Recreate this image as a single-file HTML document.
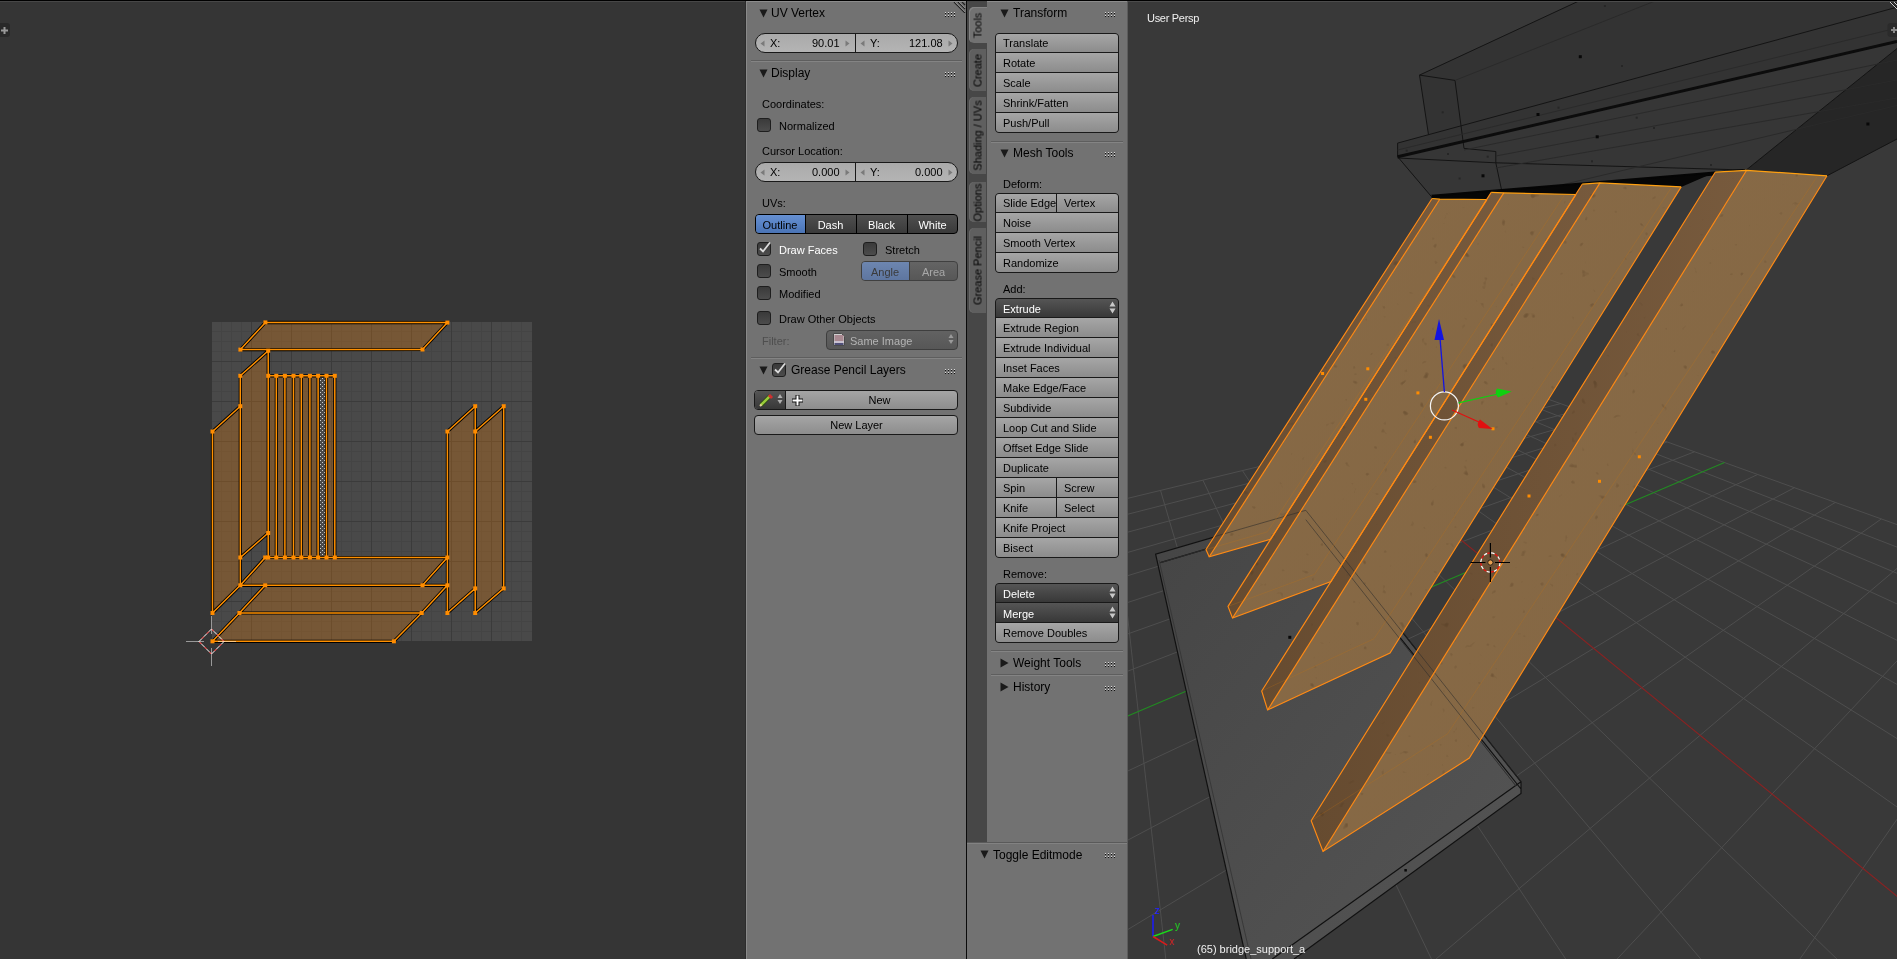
<!DOCTYPE html>
<html><head><meta charset="utf-8"><style>
*{margin:0;padding:0}
html,body{width:1897px;height:959px;overflow:hidden;background:#353535}
body{position:relative;font-family:"Liberation Sans",sans-serif}
.a{position:absolute}
.t{position:absolute;white-space:nowrap;line-height:1;will-change:transform}
.tool{background:linear-gradient(#a5a5a5,#8d8d8d);border:1px solid #191919}
.tool0{background:linear-gradient(#a6a6a6,#8c8c8c)}
.menu{background:linear-gradient(#555555,#383838)}
.num{background:linear-gradient(#aaaaaa,#b4b4b4);border:1px solid #191919;border-radius:10px}
.cb{background:linear-gradient(#3a3a3a,#4c4c4c);border:1px solid #1e1e1e;border-radius:3px}
.radio{background:linear-gradient(#4f4f4f,#3a3a3a);border:1px solid #000}
.rsel{background:linear-gradient(#6690d2,#4a74b6)}
</style></head><body>
<svg class="a" style="left:0;top:0" width="745" height="959">
<defs><pattern id="dots" x="0" y="0" width="4" height="4" patternUnits="userSpaceOnUse"><rect width="4" height="4" fill="#4a4a4a"/><rect x="0" y="0" width="1" height="1" fill="#d0d0d0"/><rect x="2" y="2" width="1" height="1" fill="#d0d0d0"/></pattern></defs>
<rect x="212" y="322" width="320" height="319" fill="#494949"/>
<path d="M221.5 322V641M231.5 322V641M241.5 322V641M251.5 322V641M261.5 322V641M271.5 322V641M281.5 322V641M291.5 322V641M301.5 322V641M311.5 322V641M321.5 322V641M331.5 322V641M341.5 322V641M351.5 322V641M361.5 322V641M371.5 322V641M381.5 322V641M391.5 322V641M401.5 322V641M411.5 322V641M421.5 322V641M431.5 322V641M441.5 322V641M451.5 322V641M461.5 322V641M471.5 322V641M481.5 322V641M491.5 322V641M501.5 322V641M511.5 322V641M521.5 322V641M212 331.5H532M212 341.5H532M212 351.5H532M212 361.5H532M212 371.5H532M212 381.5H532M212 391.5H532M212 401.5H532M212 411.5H532M212 421.5H532M212 431.5H532M212 441.5H532M212 451.5H532M212 461.5H532M212 471.5H532M212 481.5H532M212 491.5H532M212 501.5H532M212 511.5H532M212 521.5H532M212 531.5H532M212 541.5H532M212 551.5H532M212 561.5H532M212 571.5H532M212 581.5H532M212 591.5H532M212 601.5H532M212 611.5H532M212 621.5H532M212 631.5H532" stroke="#444444" stroke-width="1"/>
<path d="M251.5 322V641M212 361.5H532M291.5 322V641M212 401.5H532M331.5 322V641M212 441.5H532M371.5 322V641M212 481.5H532M411.5 322V641M212 521.5H532M451.5 322V641M212 561.5H532M491.5 322V641M212 601.5H532" stroke="#3b3b3b" stroke-width="1"/>
<polygon points="265.4,322.4 447.4,322.6 422.5,349.5 240.4,349.6" fill="rgba(255,133,0,0.25)"/>
<polygon points="268.2,350.7 268.2,533 240.3,557.5 240.3,375.8" fill="rgba(255,133,0,0.25)"/>
<polygon points="240.3,406.2 240.3,585.3 212.5,613 212.5,431.5" fill="rgba(255,133,0,0.25)"/>
<polygon points="268.2,375.8 334.8,375.8 334.8,557.5 268.2,557.5" fill="rgba(255,133,0,0.25)"/>
<polygon points="265.2,557.5 447.4,557.5 422.5,585.3 240.3,585.3" fill="rgba(255,133,0,0.25)"/>
<polygon points="265.2,585.3 447.4,585.3 421.7,613 239.4,613" fill="rgba(255,133,0,0.25)"/>
<polygon points="239.4,613 421.7,613 393.9,641.3 212.5,641.3" fill="rgba(255,133,0,0.25)"/>
<polygon points="447.4,431.5 475.2,406.2 475.2,588.4 447.4,613" fill="rgba(255,133,0,0.25)"/>
<polygon points="475.2,431.5 503.7,406.2 503.7,588.4 475.2,613" fill="rgba(255,133,0,0.25)"/>
<rect x="319.1" y="376" width="6.399999999999977" height="181" fill="url(#dots)"/>
<path d="M265.4,322.4L447.4,322.6L422.5,349.5L240.4,349.6ZM268.2,350.7L268.2,533L240.3,557.5L240.3,375.8ZM240.3,406.2L240.3,585.3L212.5,613L212.5,431.5ZM268.2,375.8L334.8,375.8L334.8,557.5L268.2,557.5ZM265.2,557.5L447.4,557.5L422.5,585.3L240.3,585.3ZM265.2,585.3L447.4,585.3L421.7,613L239.4,613ZM239.4,613L421.7,613L393.9,641.3L212.5,641.3ZM447.4,431.5L475.2,406.2L475.2,588.4L447.4,613ZM475.2,431.5L503.7,406.2L503.7,588.4L475.2,613ZM268.2,375.8V557.5M276.3,375.8V557.5M284.9,375.8V557.5M293.5,375.8V557.5M301.3,375.8V557.5M309.9,375.8V557.5M318.1,375.8V557.5M326.5,375.8V557.5M334.8,375.8V557.5" stroke="#000" stroke-width="3.2" fill="none" stroke-linejoin="round"/>
<path d="M265.4,322.4L447.4,322.6L422.5,349.5L240.4,349.6ZM268.2,350.7L268.2,533L240.3,557.5L240.3,375.8ZM240.3,406.2L240.3,585.3L212.5,613L212.5,431.5ZM268.2,375.8L334.8,375.8L334.8,557.5L268.2,557.5ZM265.2,557.5L447.4,557.5L422.5,585.3L240.3,585.3ZM265.2,585.3L447.4,585.3L421.7,613L239.4,613ZM239.4,613L421.7,613L393.9,641.3L212.5,641.3ZM447.4,431.5L475.2,406.2L475.2,588.4L447.4,613ZM475.2,431.5L503.7,406.2L503.7,588.4L475.2,613ZM268.2,375.8V557.5M276.3,375.8V557.5M284.9,375.8V557.5M293.5,375.8V557.5M301.3,375.8V557.5M309.9,375.8V557.5M318.1,375.8V557.5M326.5,375.8V557.5M334.8,375.8V557.5" stroke="#ff9000" stroke-width="1.5" fill="none" stroke-linejoin="round"/>
<rect x="501.7" y="586.4" width="4" height="4" fill="#ff8c00"/><rect x="473.2" y="586.4" width="4" height="4" fill="#ff8c00"/><rect x="332.8" y="373.8" width="4" height="4" fill="#ff8c00"/><rect x="324.5" y="373.8" width="4" height="4" fill="#ff8c00"/><rect x="419.7" y="611.0" width="4" height="4" fill="#ff8c00"/><rect x="210.5" y="611.0" width="4" height="4" fill="#ff8c00"/><rect x="238.3" y="373.8" width="4" height="4" fill="#ff8c00"/><rect x="445.4" y="429.5" width="4" height="4" fill="#ff8c00"/><rect x="299.3" y="555.5" width="4" height="4" fill="#ff8c00"/><rect x="266.2" y="531.0" width="4" height="4" fill="#ff8c00"/><rect x="501.7" y="404.2" width="4" height="4" fill="#ff8c00"/><rect x="473.2" y="404.2" width="4" height="4" fill="#ff8c00"/><rect x="307.9" y="555.5" width="4" height="4" fill="#ff8c00"/><rect x="263.2" y="583.3" width="4" height="4" fill="#ff8c00"/><rect x="266.2" y="555.5" width="4" height="4" fill="#ff8c00"/><rect x="420.5" y="347.5" width="4" height="4" fill="#ff8c00"/><rect x="299.3" y="373.8" width="4" height="4" fill="#ff8c00"/><rect x="237.4" y="611.0" width="4" height="4" fill="#ff8c00"/><rect x="307.9" y="373.8" width="4" height="4" fill="#ff8c00"/><rect x="316.1" y="555.5" width="4" height="4" fill="#ff8c00"/><rect x="274.3" y="555.5" width="4" height="4" fill="#ff8c00"/><rect x="266.2" y="373.8" width="4" height="4" fill="#ff8c00"/><rect x="445.4" y="611.0" width="4" height="4" fill="#ff8c00"/><rect x="445.4" y="583.3" width="4" height="4" fill="#ff8c00"/><rect x="263.4" y="320.4" width="4" height="4" fill="#ff8c00"/><rect x="391.9" y="639.3" width="4" height="4" fill="#ff8c00"/><rect x="473.2" y="429.5" width="4" height="4" fill="#ff8c00"/><rect x="263.2" y="555.5" width="4" height="4" fill="#ff8c00"/><rect x="238.4" y="347.6" width="4" height="4" fill="#ff8c00"/><rect x="238.3" y="583.3" width="4" height="4" fill="#ff8c00"/><rect x="266.2" y="348.7" width="4" height="4" fill="#ff8c00"/><rect x="274.3" y="373.8" width="4" height="4" fill="#ff8c00"/><rect x="316.1" y="373.8" width="4" height="4" fill="#ff8c00"/><rect x="282.9" y="555.5" width="4" height="4" fill="#ff8c00"/><rect x="291.5" y="555.5" width="4" height="4" fill="#ff8c00"/><rect x="210.5" y="429.5" width="4" height="4" fill="#ff8c00"/><rect x="210.5" y="639.3" width="4" height="4" fill="#ff8c00"/><rect x="445.4" y="555.5" width="4" height="4" fill="#ff8c00"/><rect x="420.5" y="583.3" width="4" height="4" fill="#ff8c00"/><rect x="332.8" y="555.5" width="4" height="4" fill="#ff8c00"/><rect x="282.9" y="373.8" width="4" height="4" fill="#ff8c00"/><rect x="238.3" y="555.5" width="4" height="4" fill="#ff8c00"/><rect x="238.3" y="404.2" width="4" height="4" fill="#ff8c00"/><rect x="473.2" y="611.0" width="4" height="4" fill="#ff8c00"/><rect x="291.5" y="373.8" width="4" height="4" fill="#ff8c00"/><rect x="324.5" y="555.5" width="4" height="4" fill="#ff8c00"/><rect x="445.4" y="320.6" width="4" height="4" fill="#ff8c00"/>
<path d="M199.0,641.5L211.5,629.0L224.0,641.5L211.5,654.0Z" stroke="#fff" stroke-width="1" fill="none"/>
<path d="M199.0,641.5L211.5,629.0L224.0,641.5L211.5,654.0Z" stroke="#e00" stroke-width="1" stroke-dasharray="3 4" stroke-dashoffset="-4" fill="none"/>
<path d="M186.5,641.5H204.5M218.5,641.5H236.5M211.5,616.5V634.5M211.5,648.5V666.5" stroke="#fff" stroke-width="1" stroke-dasharray="1 1"/>
</svg>
<div class="a" style="left:-5px;top:23px;width:15px;height:14px;background:#292929;border-radius:3px"></div>
<svg class="a" style="left:0;top:26px" width="9" height="9"><path d="M4.5 1V8M1 4.5H8" stroke="#999" stroke-width="2"/></svg>
<svg class="a" style="left:0;top:0" width="1897" height="959" viewBox="0 0 1897 959">
<defs><clipPath id="vp"><rect x="1128" y="1" width="769" height="958"/></clipPath><linearGradient id="gw" x1="0" y1="0" x2="1" y2="1"><stop offset="0" stop-color="#896c48"/><stop offset="1" stop-color="#836542"/></linearGradient><linearGradient id="gn" x1="0" y1="0" x2="1" y2="1"><stop offset="0" stop-color="#6e5335"/><stop offset="1" stop-color="#6a4f33"/></linearGradient><linearGradient id="gp" x1="0" y1="0" x2="1" y2="1"><stop offset="0" stop-color="#454545"/><stop offset="1" stop-color="#555555"/></linearGradient><filter id="tex" x="0" y="0" width="100%" height="100%" color-interpolation-filters="sRGB"><feTurbulence type="fractalNoise" baseFrequency="0.10" numOctaves="2" seed="4" result="n"/><feColorMatrix in="n" type="matrix" values="0 0 0 0 0.30  0 0 0 0 0.21  0 0 0 0 0.12  8 0 0 0 -5.9" result="m"/><feComposite in="m" in2="SourceGraphic" operator="in"/></filter><linearGradient id="gn2" x1="0" y1="0" x2="1" y2="0"><stop offset="0" stop-color="#664b30"/><stop offset="1" stop-color="#775a3d"/></linearGradient></defs>
<g clip-path="url(#vp)">
<rect x="1128" y="1" width="769" height="958" fill="#393939"/>
<path d="M1011.5 526.5L1543.8 397.6M1011.5 526.5L-444.1 6366.8M1006.9 545.1L1560.6 403.6M1065.3 513.5L860.4 3461.8M1001.6 566.3L1578.7 410.1M1114.8 501.5L1328.6 2419.2M995.6 590.4L1598.2 417.1M1160.5 490.4L1569.5 1882.8M988.6 618.4L1619.3 424.7M1202.9 480.2L1716.3 1555.9M980.5 651.0L1642.2 433.0M1242.4 470.6L1815.1 1335.8M970.8 689.8L1667.2 441.9M1279.1 461.7L1886.1 1177.6M959.2 736.4L1694.5 451.8M1313.4 453.4L1939.7 1058.3M927.1 865.5L1757.6 474.5M1375.7 438.3L2015.1 890.5M903.9 958.5L1794.4 487.7M1404.0 431.4L2042.6 829.3M872.7 1083.5L1835.4 502.4M1430.7 425.0L2065.5 778.1M828.6 1260.6L1881.4 518.9M1455.9 418.9L2085.0 734.7M761.2 1530.8L1933.4 537.6M1479.7 413.1L2101.7 697.5M645.9 1993.5L1992.7 559.0M1502.2 407.7L2116.2 665.2M402.8 2969.0L2060.9 583.5M1523.5 402.5L2128.9 636.9M-444.1 6366.8L2140.2 612.0M1543.8 397.6L2140.2 612.0" stroke="#4e4e4e" stroke-width="1" fill="none"/>
<path d="M1345.5 445.6L1981.5 965.2" stroke="#8a2222" stroke-width="1.1" fill="none"/>
<path d="M945.0 793.6L1724.5 462.6" stroke="#228a22" stroke-width="1.1" fill="none"/>
<polygon points="1155.6,554.1 1305.8,510.3 1521,781.8 1521,793.5 1294,959 1246,959" fill="url(#gp)"/>
<path d="M1246.2,959 L1155.6,554.1 L1305.8,510.3 L1521,781.8 L1521,793.5 L1294,959 M1521,781.8 L1272.3,959 M1160.3,562.7 L1305.8,519.7 L1521,789" stroke="#111" stroke-width="1.2" fill="none"/>
<path d="M1160.3,562.7 L1305.8,519.7 M1305.8,519.7 L1516,786 M1159,560 L1251,959" stroke="#333" stroke-width="0.8" fill="none"/>
<polygon points="1419.5,75.1 1581,0 1897,0 1897,139 1827,175.8 1745,171 1431.6,196.8 1397.6,156.7 1397.6,143.1 1428.5,134.8" fill="#333333"/>
<polygon points="1745,171 1897,48.5 1897,139 1827,175.8" fill="#262626"/>
<polygon points="1397.6,156.7 1897,41.5 1897,48.5 1745,171 1431.6,196.8" fill="#363636"/>
<path d="M1419.5,75.1L1581,0M1419.5,75.1L1455,80.4M1419.5,75.1L1428.5,134.8M1455,80.4L1464,148.4M1397.6,143.1L1897,7.2M1397.6,143.1L1397.6,156.7M1397.6,156.7L1431.6,196.8M1745,171L1897,48.5M1827,175.8L1897,139M1397.6,158L1495.8,162.8M1495.8,162.8L1745,170M1464,148.4L1495.8,151.5M1495.8,151.5L1495.8,162.8M1495.8,162.8L1501.9,191.5" stroke="#141414" stroke-width="1" fill="none"/>
<path d="M1455,80.4L1657.5,0M1397.6,150L1897,28M1464,150L1897,60M1495.8,156L1897,80M1495.8,168L1897,98M1500,199.5L1897,105.5" stroke="#2a2a2a" stroke-width="1" fill="none"/>
<path d="M1397.6,156.7 L1897,41.5" stroke="#0c0c0c" stroke-width="3" fill="none"/>
<path d="M1431.6,196.8 L1745,171" stroke="#050505" stroke-width="4" fill="none"/>
<rect x="1578.8" y="55.2" width="3" height="3" fill="#080808"/>
<rect x="1536.5" y="113.0" width="3" height="3" fill="#080808"/>
<rect x="1595.7" y="135.3" width="3" height="3" fill="#080808"/>
<rect x="1481.5" y="174.3" width="3" height="3" fill="#080808"/>
<rect x="1866.4" y="122.5" width="3" height="3" fill="#080808"/>
<rect x="1603.9" y="5.0" width="2" height="2" fill="#262626"/>
<rect x="1621.0" y="65.0" width="2" height="2" fill="#262626"/>
<rect x="1441.7" y="111.3" width="2" height="2" fill="#262626"/>
<rect x="1405.7" y="149.7" width="2" height="2" fill="#262626"/>
<rect x="1447.0" y="153.0" width="2" height="2" fill="#262626"/>
<rect x="1486.7" y="155.7" width="2" height="2" fill="#262626"/>
<rect x="1557.5" y="106.7" width="2" height="2" fill="#262626"/>
<rect x="1635.7" y="116.7" width="2" height="2" fill="#262626"/>
<rect x="1653.0" y="127.0" width="2" height="2" fill="#262626"/>
<rect x="1591.0" y="160.3" width="2" height="2" fill="#262626"/>
<rect x="1710.0" y="164.0" width="2" height="2" fill="#262626"/>
<rect x="1458.6" y="177.5" width="2" height="2" fill="#262626"/>
<rect x="1288.3" y="635.8" width="3" height="3" fill="#080808"/>
<rect x="1404.35" y="869.05" width="2.5" height="2.5" fill="#080808"/>
<polygon points="1431.6,196.8 1745,171 1715.2,172.2 1681.2,186.9 1600,182.9 1582.2,184.2 1576,194.5 1503.8,192.9 1491.2,192.4 1487,199.5 1439.8,199.2 1432.1,198.5" fill="#060606"/>
<polygon points="1439.8,199.2 1487.0,199.5 1270.5,539.2 1209.2,556.8" fill="url(#gw)"/><polygon points="1432.1,198.5 1439.8,199.2 1209.2,556.8 1206.0,549.5" fill="url(#gn2)"/><polygon points="1503.8,192.9 1576.0,194.5 1331.0,581.6 1232.5,618.0" fill="url(#gw)"/><polygon points="1491.2,192.4 1503.8,192.9 1232.5,618.0 1228.0,606.4" fill="url(#gn2)"/><polygon points="1600.0,182.9 1681.2,186.9 1390.0,653.0 1267.6,710.0" fill="url(#gw)"/><polygon points="1582.2,184.2 1600.0,182.9 1267.6,710.0 1261.7,691.0" fill="url(#gn2)"/><polygon points="1746.6,170.3 1827.0,175.8 1469.3,758.1 1323.0,851.5" fill="url(#gw)"/><polygon points="1715.2,172.2 1746.6,170.3 1323.0,851.5 1311.2,820.8" fill="url(#gn2)"/>
<g filter="url(#tex)" opacity="0.35"><polygon points="1439.8,199.2 1487.0,199.5 1270.5,539.2 1209.2,556.8" fill="url(#gw)"/><polygon points="1432.1,198.5 1439.8,199.2 1209.2,556.8 1206.0,549.5" fill="url(#gn2)"/><polygon points="1503.8,192.9 1576.0,194.5 1331.0,581.6 1232.5,618.0" fill="url(#gw)"/><polygon points="1491.2,192.4 1503.8,192.9 1232.5,618.0 1228.0,606.4" fill="url(#gn2)"/><polygon points="1600.0,182.9 1681.2,186.9 1390.0,653.0 1267.6,710.0" fill="url(#gw)"/><polygon points="1582.2,184.2 1600.0,182.9 1267.6,710.0 1261.7,691.0" fill="url(#gn2)"/><polygon points="1746.6,170.3 1827.0,175.8 1469.3,758.1 1323.0,851.5" fill="url(#gw)"/><polygon points="1715.2,172.2 1746.6,170.3 1323.0,851.5 1311.2,820.8" fill="url(#gn2)"/></g>
<path d="M1305.8,510.3 L1521,781.8 M1305.8,519.7 L1516,786 M1213.5,536.9 L1305.8,510.3" stroke="#2a2a2a" stroke-width="1" fill="none" opacity="0.55"/>
<polyline points="1206.0,549.5 1267.3,531.9 1487.0,200.5" stroke="#c87410" stroke-width="0.8" fill="none" opacity="0.3"/>
<polyline points="1228.0,606.4 1314.5,574.4 1564.0,195.5" stroke="#c87410" stroke-width="0.8" fill="none" opacity="0.3"/>
<polyline points="1261.7,691.0 1374.1,638.7 1671.2,187.9" stroke="#c87410" stroke-width="0.8" fill="none" opacity="0.3"/>
<polyline points="1311.2,820.8 1447.5,733.8 1817.0,176.8" stroke="#c87410" stroke-width="0.8" fill="none" opacity="0.3"/>
<polyline points="1432.1,198.5 1206.0,549.5 1209.2,556.8 1270.5,539.2 1487.0,199.5" stroke="#ff8a14" stroke-width="1.15" fill="none"/>
<path d="M1439.8,199.2L1209.2,556.8" stroke="#ff8a14" stroke-width="1.15" fill="none"/>
<polyline points="1432.1,198.5 1439.8,199.2 1487.0,199.5" stroke="#ffa010" stroke-width="1.2" fill="none"/>
<polyline points="1491.2,192.4 1228.0,606.4 1232.5,618.0 1331.0,581.6 1576.0,194.5" stroke="#ff8a14" stroke-width="1.15" fill="none"/>
<path d="M1503.8,192.9L1232.5,618" stroke="#ff8a14" stroke-width="1.15" fill="none"/>
<polyline points="1491.2,192.4 1503.8,192.9 1576.0,194.5" stroke="#ffa010" stroke-width="1.2" fill="none"/>
<polyline points="1582.2,184.2 1261.7,691.0 1267.6,710.0 1390.0,653.0 1681.2,186.9" stroke="#ff8a14" stroke-width="1.15" fill="none"/>
<path d="M1600,182.9L1267.6,710" stroke="#ff8a14" stroke-width="1.15" fill="none"/>
<polyline points="1582.2,184.2 1600.0,182.9 1681.2,186.9" stroke="#ffa010" stroke-width="1.2" fill="none"/>
<polyline points="1715.2,172.2 1311.2,820.8 1323.0,851.5 1469.3,758.1 1827.0,175.8" stroke="#ff8a14" stroke-width="1.15" fill="none"/>
<path d="M1746.6,170.3L1323,851.5" stroke="#ff8a14" stroke-width="1.15" fill="none"/>
<polyline points="1715.2,172.2 1746.6,170.3 1827.0,175.8" stroke="#ffa010" stroke-width="1.2" fill="none"/>
</g>
<rect x="1321.1" y="372.0" width="3" height="3" fill="#ff8c00"/>
<rect x="1366.3" y="367.3" width="3" height="3" fill="#ff8c00"/>
<rect x="1364.3" y="397.8" width="3" height="3" fill="#ff8c00"/>
<rect x="1416.4" y="391.4" width="3" height="3" fill="#ff8c00"/>
<rect x="1428.9" y="435.8" width="3" height="3" fill="#ff8c00"/>
<rect x="1491.5" y="427.3" width="3" height="3" fill="#ff8c00"/>
<rect x="1527.5" y="494.5" width="3" height="3" fill="#ff8c00"/>
<rect x="1598.0" y="479.8" width="3" height="3" fill="#ff8c00"/>
<rect x="1637.8" y="455.3" width="3" height="3" fill="#ff8c00"/>
<circle cx="1444.4" cy="405.9" r="14" stroke="#f4f4f4" stroke-width="1.2" fill="none"/>
<path d="M1444.4,392 L1440,338" stroke="#1414e0" stroke-width="1.3"/><path d="M1439,319 L1434.5,340 L1444,340Z" fill="#1414e0"/>
<path d="M1458.5,402.8 L1498,394" stroke="#10d010" stroke-width="1.2"/><path d="M1511.7,391.5 L1497,388.5 Q1494,393 1498,397.5Z" fill="#10d010"/>
<path d="M1452,410 L1480,422.5" stroke="#e01010" stroke-width="1.3"/><path d="M1492.5,429 L1480,419.5 Q1476,424 1479,428Z" fill="#e01010"/>
<circle cx="1490.4" cy="562.5" r="9.6" stroke="#fff" stroke-width="1.2" stroke-dasharray="3.8 3.8" fill="none"/>
<circle cx="1490.4" cy="562.5" r="9.6" stroke="#f01010" stroke-width="1.2" stroke-dasharray="3.8 3.8" stroke-dashoffset="3.8" fill="none"/>
<path d="M1470.5,562.5H1485.5M1495,562.5H1510M1490.4,543V557.5M1490.4,567V582" stroke="#000" stroke-width="1.2"/>
<circle cx="1490.4" cy="562.5" r="2.6" fill="#e8a050" stroke="#111" stroke-width="0.8"/>
<path d="M1153,936.5V915" stroke="#1a1aff" stroke-width="1.5"/><path d="M1153,936.5L1172.7,929.4" stroke="#1adc1a" stroke-width="1.5"/><path d="M1153,936.5L1167.2,945.2" stroke="#dc1a1a" stroke-width="1.5"/>
<text x="1155" y="914" font-size="10" fill="#2020ff" font-family="Liberation Sans">z</text>
<text x="1175" y="929" font-size="10" fill="#20d020" font-family="Liberation Sans">y</text>
<text x="1169" y="945" font-size="10" fill="#d02020" font-family="Liberation Sans">x</text>
<path d="M1128,1.5H1897" stroke="#4c4c4c" stroke-width="1"/>
<rect x="1887.5" y="23" width="15" height="14" rx="3" fill="#2b2b2b"/>
<path d="M1894,27V33M1891,30H1897" stroke="#8a8a8a" stroke-width="2"/>
<path d="M1890,2L1897,9M1894,2L1897,5" stroke="#d0d0d0" stroke-width="1"/><path d="M1891,2L1897,8M1895,2L1897,4" stroke="#111" stroke-width="0.8"/>
</svg>
<div class="t" style="left:1147px;top:13px;font-size:11px;letter-spacing:-0.3px;color:#f0f0f0">User Persp</div>
<div class="t" style="left:1197px;top:944px;font-size:11px;color:#f0f0f0">(65) bridge_support_a</div>
<div class="a" style="left:745px;top:0;width:1px;height:959px;background:#2c2c2c"></div>
<div class="a" style="left:746px;top:0;width:220px;height:959px;background:#727272;border-left:1px solid #8a8a8a;box-sizing:border-box"></div>
<svg class="a" style="left:759px;top:9px" width="9" height="9"><path d="M0.5 0.5 L8.5 0.5 L4.5 8.5 Z" fill="#1a1a1a"/></svg><div class="t" style="left:771px;top:7.14px;font-size:12px;color:#000;">UV Vertex</div><svg class="a" style="left:945px;top:12px" width="12" height="6"><rect x="0" y="0" width="1" height="1" fill="#d8d8d8"/><rect x="0" y="1" width="1" height="1" fill="#111"/><rect x="0" y="3" width="1" height="1" fill="#d8d8d8"/><rect x="0" y="4" width="1" height="1" fill="#111"/><rect x="3" y="0" width="1" height="1" fill="#d8d8d8"/><rect x="3" y="1" width="1" height="1" fill="#111"/><rect x="3" y="3" width="1" height="1" fill="#d8d8d8"/><rect x="3" y="4" width="1" height="1" fill="#111"/><rect x="6" y="0" width="1" height="1" fill="#d8d8d8"/><rect x="6" y="1" width="1" height="1" fill="#111"/><rect x="6" y="3" width="1" height="1" fill="#d8d8d8"/><rect x="6" y="4" width="1" height="1" fill="#111"/><rect x="9" y="0" width="1" height="1" fill="#d8d8d8"/><rect x="9" y="1" width="1" height="1" fill="#111"/><rect x="9" y="3" width="1" height="1" fill="#d8d8d8"/><rect x="9" y="4" width="1" height="1" fill="#111"/></svg>
<div class="a num" style="left:755px;top:33px;width:201px;height:18px"></div><div class="a" style="left:855px;top:33px;width:1px;height:20px;background:#191919"></div><svg class="a" style="left:760px;top:40px" width="5" height="7"><path d="M4.5 0.5 L0.5 3.5 L4.5 6.5Z" fill="#7a7a7a"/></svg><svg class="a" style="left:845px;top:40px" width="5" height="7"><path d="M0.5 0.5 L4.5 3.5 L0.5 6.5Z" fill="#7a7a7a"/></svg><svg class="a" style="left:860px;top:40px" width="5" height="7"><path d="M4.5 0.5 L0.5 3.5 L4.5 6.5Z" fill="#7a7a7a"/></svg><svg class="a" style="left:948px;top:40px" width="5" height="7"><path d="M0.5 0.5 L4.5 3.5 L0.5 6.5Z" fill="#7a7a7a"/></svg><div class="t" style="left:770px;top:38.29px;font-size:11px;color:#000;">X:</div><div class="t" style="right:1057px;top:38.29px;font-size:11px;color:#000;">90.01</div><div class="t" style="left:870px;top:38.29px;font-size:11px;color:#000;">Y:</div><div class="t" style="right:954px;top:38.29px;font-size:11px;color:#000;">121.08</div>
<div class="a" style="left:751px;top:60px;width:211px;height:1px;background:#5e5e5e"></div><div class="a" style="left:751px;top:61px;width:211px;height:1px;background:#848484"></div>
<svg class="a" style="left:759px;top:69px" width="9" height="9"><path d="M0.5 0.5 L8.5 0.5 L4.5 8.5 Z" fill="#1a1a1a"/></svg><div class="t" style="left:771px;top:67.14px;font-size:12px;color:#000;">Display</div><svg class="a" style="left:945px;top:72px" width="12" height="6"><rect x="0" y="0" width="1" height="1" fill="#d8d8d8"/><rect x="0" y="1" width="1" height="1" fill="#111"/><rect x="0" y="3" width="1" height="1" fill="#d8d8d8"/><rect x="0" y="4" width="1" height="1" fill="#111"/><rect x="3" y="0" width="1" height="1" fill="#d8d8d8"/><rect x="3" y="1" width="1" height="1" fill="#111"/><rect x="3" y="3" width="1" height="1" fill="#d8d8d8"/><rect x="3" y="4" width="1" height="1" fill="#111"/><rect x="6" y="0" width="1" height="1" fill="#d8d8d8"/><rect x="6" y="1" width="1" height="1" fill="#111"/><rect x="6" y="3" width="1" height="1" fill="#d8d8d8"/><rect x="6" y="4" width="1" height="1" fill="#111"/><rect x="9" y="0" width="1" height="1" fill="#d8d8d8"/><rect x="9" y="1" width="1" height="1" fill="#111"/><rect x="9" y="3" width="1" height="1" fill="#d8d8d8"/><rect x="9" y="4" width="1" height="1" fill="#111"/></svg>
<div class="t" style="left:762px;top:98.69px;font-size:11px;color:#000;">Coordinates:</div>
<div class="a cb" style="left:757px;top:118px;width:12px;height:12px"></div>
<div class="t" style="left:779px;top:120.69px;font-size:11px;color:#000;">Normalized</div>
<div class="t" style="left:762px;top:145.69px;font-size:11px;color:#000;">Cursor Location:</div>
<div class="a num" style="left:755px;top:162px;width:201px;height:18px"></div><div class="a" style="left:855px;top:162px;width:1px;height:20px;background:#191919"></div><svg class="a" style="left:760px;top:169px" width="5" height="7"><path d="M4.5 0.5 L0.5 3.5 L4.5 6.5Z" fill="#7a7a7a"/></svg><svg class="a" style="left:845px;top:169px" width="5" height="7"><path d="M0.5 0.5 L4.5 3.5 L0.5 6.5Z" fill="#7a7a7a"/></svg><svg class="a" style="left:860px;top:169px" width="5" height="7"><path d="M4.5 0.5 L0.5 3.5 L4.5 6.5Z" fill="#7a7a7a"/></svg><svg class="a" style="left:948px;top:169px" width="5" height="7"><path d="M0.5 0.5 L4.5 3.5 L0.5 6.5Z" fill="#7a7a7a"/></svg><div class="t" style="left:770px;top:167.29px;font-size:11px;color:#000;">X:</div><div class="t" style="right:1057px;top:167.29px;font-size:11px;color:#000;">0.000</div><div class="t" style="left:870px;top:167.29px;font-size:11px;color:#000;">Y:</div><div class="t" style="right:954px;top:167.29px;font-size:11px;color:#000;">0.000</div>
<div class="t" style="left:762px;top:197.69px;font-size:11px;color:#000;">UVs:</div>
<div class="a radio" style="left:755px;top:214px;width:201px;height:18px;border-radius:4px;overflow:hidden"><div class="a rsel" style="left:0;top:0;width:49px;height:18px"></div><div class="a" style="left:49px;top:0;width:1px;height:18px;background:#000"></div><div class="a" style="left:100px;top:0;width:1px;height:18px;background:#000"></div><div class="a" style="left:151px;top:0;width:1px;height:18px;background:#000"></div></div>
<div class="t" style="left:755px;width:50px;text-align:center;top:219.99px;font-size:11px;color:#000;">Outline</div>
<div class="t" style="left:805px;width:51px;text-align:center;top:219.99px;font-size:11px;color:#fff;">Dash</div>
<div class="t" style="left:856px;width:51px;text-align:center;top:219.99px;font-size:11px;color:#fff;">Black</div>
<div class="t" style="left:907px;width:51px;text-align:center;top:219.99px;font-size:11px;color:#fff;">White</div>
<div class="a cb" style="left:757px;top:242px;width:12px;height:12px"></div><svg class="a" style="left:757px;top:240px" width="16" height="16"><path d="M3 8.5 L6 11.5 L13 2.5" stroke="#dcdcdc" stroke-width="1.8" fill="none"/></svg>
<div class="t" style="left:779px;top:244.69px;font-size:11px;color:#fff;">Draw Faces</div>
<div class="a cb" style="left:863px;top:242px;width:12px;height:12px"></div>
<div class="t" style="left:885px;top:244.69px;font-size:11px;color:#000;">Stretch</div>
<div class="a cb" style="left:757px;top:264px;width:12px;height:12px"></div>
<div class="t" style="left:779px;top:266.69px;font-size:11px;color:#000;">Smooth</div>
<div class="a" style="left:861px;top:261px;width:95px;height:18px;border:1px solid #404040;border-radius:4px;overflow:hidden;background:linear-gradient(#646464,#575757)"><div class="a" style="left:0;top:0;width:47px;height:18px;background:linear-gradient(#6d86b0,#5e76a0)"></div><div class="a" style="left:47px;top:0;width:1px;height:18px;background:#404040"></div></div>
<div class="t" style="left:861px;width:48px;text-align:center;top:266.69px;font-size:11px;color:#3a3a3a;">Angle</div>
<div class="t" style="left:909px;width:49px;text-align:center;top:266.69px;font-size:11px;color:#a8a8a8;">Area</div>
<div class="a cb" style="left:757px;top:286px;width:12px;height:12px"></div>
<div class="t" style="left:779px;top:288.69px;font-size:11px;color:#000;">Modified</div>
<div class="a cb" style="left:757px;top:311px;width:12px;height:12px"></div>
<div class="t" style="left:779px;top:313.69px;font-size:11px;color:#000;">Draw Other Objects</div>
<div class="t" style="left:762px;top:335.69px;font-size:11px;color:#4e4e4e;">Filter:</div>
<div class="a" style="left:826px;top:330px;width:130px;height:18px;border:1px solid #3e3e3e;border-radius:4px;background:linear-gradient(#626262,#575757)"></div>
<svg class="a" style="left:832px;top:332px" width="14" height="15"><path d="M1.5 1.5 H9.5 L12.5 4.5 V13.5 H1.5Z" fill="#d0d0d0" stroke="#4a4a4a" stroke-width="1"/><rect x="2.5" y="3" width="9" height="6" fill="#a88890"/><rect x="2.5" y="9" width="9" height="2" fill="#c8c0d0"/><rect x="2.5" y="11" width="9" height="2" fill="#505078"/></svg>
<div class="t" style="left:850px;top:335.69px;font-size:11px;color:#b4b4b4;">Same Image</div>
<svg class="a" style="left:948px;top:333px" width="6" height="13"><path d="M0.5 5 L3 1 L5.5 5Z M0.5 7 L3 11 L5.5 7Z" fill="#9a9a9a"/></svg>
<div class="a" style="left:751px;top:357px;width:211px;height:1px;background:#5e5e5e"></div><div class="a" style="left:751px;top:358px;width:211px;height:1px;background:#848484"></div>
<svg class="a" style="left:759px;top:366px" width="9" height="9"><path d="M0.5 0.5 L8.5 0.5 L4.5 8.5 Z" fill="#1a1a1a"/></svg>
<div class="a cb" style="left:772px;top:363px;width:12px;height:12px"></div><svg class="a" style="left:772px;top:361px" width="16" height="16"><path d="M3 8.5 L6 11.5 L13 2.5" stroke="#dcdcdc" stroke-width="1.8" fill="none"/></svg>
<div class="t" style="left:791px;top:363.84px;font-size:12px;color:#000;">Grease Pencil Layers</div>
<svg class="a" style="left:945px;top:369px" width="12" height="6"><rect x="0" y="0" width="1" height="1" fill="#d8d8d8"/><rect x="0" y="1" width="1" height="1" fill="#111"/><rect x="0" y="3" width="1" height="1" fill="#d8d8d8"/><rect x="0" y="4" width="1" height="1" fill="#111"/><rect x="3" y="0" width="1" height="1" fill="#d8d8d8"/><rect x="3" y="1" width="1" height="1" fill="#111"/><rect x="3" y="3" width="1" height="1" fill="#d8d8d8"/><rect x="3" y="4" width="1" height="1" fill="#111"/><rect x="6" y="0" width="1" height="1" fill="#d8d8d8"/><rect x="6" y="1" width="1" height="1" fill="#111"/><rect x="6" y="3" width="1" height="1" fill="#d8d8d8"/><rect x="6" y="4" width="1" height="1" fill="#111"/><rect x="9" y="0" width="1" height="1" fill="#d8d8d8"/><rect x="9" y="1" width="1" height="1" fill="#111"/><rect x="9" y="3" width="1" height="1" fill="#d8d8d8"/><rect x="9" y="4" width="1" height="1" fill="#111"/></svg>
<div class="a tool" style="left:754px;top:390px;width:202px;height:18px;border-radius:4px;overflow:hidden"><div class="a menu" style="left:0;top:0;width:30px;height:18px"></div><div class="a" style="left:30px;top:0;width:1px;height:18px;background:#191919"></div></div>
<svg class="a" style="left:758px;top:392px" width="16" height="16"><path d="M3 13 L12 4" stroke="#2a4a10" stroke-width="4"/><path d="M3 13 L12 4" stroke="#9acb3a" stroke-width="2.5"/><path d="M11 3 L14 6" stroke="#d03030" stroke-width="3"/><path d="M2 14 L3.5 12.5" stroke="#e8d8a0" stroke-width="2"/></svg>
<svg class="a" style="left:777px;top:393px" width="6" height="13"><path d="M0.5 5 L3 1 L5.5 5Z M0.5 7 L3 11 L5.5 7Z" fill="#b0b0b0"/></svg>
<svg class="a" style="left:791px;top:394px" width="13" height="13"><path d="M6.5 1 V12 M1 6.5 H12" stroke="#111" stroke-width="4"/><path d="M6.5 1.5 V11.5 M1.5 6.5 H11.5" stroke="#fff" stroke-width="2"/></svg>
<div class="t" style="left:801px;width:157px;text-align:center;top:394.69px;font-size:11px;color:#000;">New</div>
<div class="a tool" style="left:754px;top:415px;width:202px;height:18px;border-radius:4px"></div>
<div class="t" style="left:755px;width:203px;text-align:center;top:419.69px;font-size:11px;color:#000;">New Layer</div>
<svg class="a" style="left:953px;top:1px" width="13" height="12"><path d="M1 1 L12 12 M5 1 L12 8 M9 1 L12 4" stroke="#222" stroke-width="1.2"/><path d="M2 1 L12 11 M6 1 L12 7" stroke="#aaa" stroke-width="0.6"/></svg>
<div class="a" style="left:966px;top:0;width:1px;height:959px;background:#0a0a0a"></div>
<div class="a" style="left:967px;top:0;width:20px;height:843px;background:#474747"></div>
<div class="a" style="left:969px;top:7px;width:20px;height:36px;background:#727272;border-radius:5px 0 0 5px;box-shadow:inset 1px 1px 0 #848484"></div>
<div class="t" style="left:918px;top:18.5px;width:120px;height:13px;line-height:13px;text-align:center;font-size:11px;color:#000;transform:rotate(-90deg)">Tools</div>
<div class="a" style="left:969px;top:49px;width:17px;height:42px;background:#5f5f5f;border-radius:5px 0 0 5px;box-shadow:inset 1px 0 0 #6a6a6a"></div>
<div class="t" style="left:918px;top:63.5px;width:120px;height:13px;line-height:13px;text-align:center;font-size:11px;color:#000;transform:rotate(-90deg)">Create</div>
<div class="a" style="left:969px;top:97px;width:17px;height:77px;background:#5f5f5f;border-radius:5px 0 0 5px;box-shadow:inset 1px 0 0 #6a6a6a"></div>
<div class="t" style="left:918px;top:129.0px;width:120px;height:13px;line-height:13px;text-align:center;font-size:11px;color:#000;transform:rotate(-90deg)">Shading / UVs</div>
<div class="a" style="left:969px;top:182px;width:17px;height:40px;background:#5f5f5f;border-radius:5px 0 0 5px;box-shadow:inset 1px 0 0 #6a6a6a"></div>
<div class="t" style="left:918px;top:195.5px;width:120px;height:13px;line-height:13px;text-align:center;font-size:11px;color:#000;transform:rotate(-90deg)">Options</div>
<div class="a" style="left:969px;top:228px;width:17px;height:85px;background:#5f5f5f;border-radius:5px 0 0 5px;box-shadow:inset 1px 0 0 #6a6a6a"></div>
<div class="t" style="left:918px;top:264.0px;width:120px;height:13px;line-height:13px;text-align:center;font-size:11px;color:#000;transform:rotate(-90deg)">Grease Pencil</div>
<div class="a" style="left:987px;top:0;width:140px;height:843px;background:#727272"></div>
<div class="a" style="left:967px;top:843px;width:160px;height:116px;background:#727272;border-top:1px solid #828282;box-sizing:border-box"></div>
<div class="a" style="left:967px;top:842px;width:160px;height:1px;background:#5a5a5a"></div>
<div class="a" style="left:1127px;top:0;width:1px;height:959px;background:#5c5c5c"></div>
<svg class="a" style="left:1000px;top:9px" width="9" height="9"><path d="M0.5 0.5 L8.5 0.5 L4.5 8.5 Z" fill="#1a1a1a"/></svg><div class="t" style="left:1013px;top:7.14px;font-size:12px;color:#000;">Transform</div><svg class="a" style="left:1105px;top:12px" width="12" height="6"><rect x="0" y="0" width="1" height="1" fill="#d8d8d8"/><rect x="0" y="1" width="1" height="1" fill="#111"/><rect x="0" y="3" width="1" height="1" fill="#d8d8d8"/><rect x="0" y="4" width="1" height="1" fill="#111"/><rect x="3" y="0" width="1" height="1" fill="#d8d8d8"/><rect x="3" y="1" width="1" height="1" fill="#111"/><rect x="3" y="3" width="1" height="1" fill="#d8d8d8"/><rect x="3" y="4" width="1" height="1" fill="#111"/><rect x="6" y="0" width="1" height="1" fill="#d8d8d8"/><rect x="6" y="1" width="1" height="1" fill="#111"/><rect x="6" y="3" width="1" height="1" fill="#d8d8d8"/><rect x="6" y="4" width="1" height="1" fill="#111"/><rect x="9" y="0" width="1" height="1" fill="#d8d8d8"/><rect x="9" y="1" width="1" height="1" fill="#111"/><rect x="9" y="3" width="1" height="1" fill="#d8d8d8"/><rect x="9" y="4" width="1" height="1" fill="#111"/></svg>
<div class="a" style="left:995px;top:33px;width:122px;height:98px;border:1px solid #191919;border-radius:4px;overflow:hidden;background:#191919"><div class="a tool0" style="left:0;top:0px;width:122px;height:18px"></div><div class="a tool0" style="left:0;top:19px;width:122px;height:19px"></div><div class="a tool0" style="left:0;top:39px;width:122px;height:19px"></div><div class="a tool0" style="left:0;top:59px;width:122px;height:19px"></div><div class="a tool0" style="left:0;top:79px;width:122px;height:19px"></div></div><div class="t" style="left:1003px;top:38.29px;font-size:11px;color:#000;">Translate</div><div class="t" style="left:1003px;top:58.29px;font-size:11px;color:#000;">Rotate</div><div class="t" style="left:1003px;top:78.29px;font-size:11px;color:#000;">Scale</div><div class="t" style="left:1003px;top:98.29px;font-size:11px;color:#000;">Shrink/Fatten</div><div class="t" style="left:1003px;top:118.29px;font-size:11px;color:#000;">Push/Pull</div>
<div class="a" style="left:991px;top:141px;width:132px;height:1px;background:#5e5e5e"></div><div class="a" style="left:991px;top:142px;width:132px;height:1px;background:#848484"></div>
<svg class="a" style="left:1000px;top:149px" width="9" height="9"><path d="M0.5 0.5 L8.5 0.5 L4.5 8.5 Z" fill="#1a1a1a"/></svg><div class="t" style="left:1013px;top:147.14px;font-size:12px;color:#000;">Mesh Tools</div><svg class="a" style="left:1105px;top:152px" width="12" height="6"><rect x="0" y="0" width="1" height="1" fill="#d8d8d8"/><rect x="0" y="1" width="1" height="1" fill="#111"/><rect x="0" y="3" width="1" height="1" fill="#d8d8d8"/><rect x="0" y="4" width="1" height="1" fill="#111"/><rect x="3" y="0" width="1" height="1" fill="#d8d8d8"/><rect x="3" y="1" width="1" height="1" fill="#111"/><rect x="3" y="3" width="1" height="1" fill="#d8d8d8"/><rect x="3" y="4" width="1" height="1" fill="#111"/><rect x="6" y="0" width="1" height="1" fill="#d8d8d8"/><rect x="6" y="1" width="1" height="1" fill="#111"/><rect x="6" y="3" width="1" height="1" fill="#d8d8d8"/><rect x="6" y="4" width="1" height="1" fill="#111"/><rect x="9" y="0" width="1" height="1" fill="#d8d8d8"/><rect x="9" y="1" width="1" height="1" fill="#111"/><rect x="9" y="3" width="1" height="1" fill="#d8d8d8"/><rect x="9" y="4" width="1" height="1" fill="#111"/></svg>
<div class="t" style="left:1003px;top:178.69px;font-size:11px;color:#000;">Deform:</div>
<div class="a" style="left:995px;top:193px;width:122px;height:78px;border:1px solid #191919;border-radius:4px;overflow:hidden;background:#191919"><div class="a tool0" style="left:0;top:0px;width:122px;height:18px"></div><div class="a" style="left:60px;top:0px;width:1px;height:18px;background:#191919"></div><div class="a tool0" style="left:0;top:19px;width:122px;height:19px"></div><div class="a tool0" style="left:0;top:39px;width:122px;height:19px"></div><div class="a tool0" style="left:0;top:59px;width:122px;height:19px"></div></div><div class="t" style="left:1003px;top:198.29px;font-size:11px;color:#000;">Slide Edge</div><div class="t" style="left:1064px;top:198.29px;font-size:11px;color:#000;">Vertex</div><div class="t" style="left:1003px;top:218.29px;font-size:11px;color:#000;">Noise</div><div class="t" style="left:1003px;top:238.29px;font-size:11px;color:#000;">Smooth Vertex</div><div class="t" style="left:1003px;top:258.29px;font-size:11px;color:#000;">Randomize</div>
<div class="t" style="left:1003px;top:283.69px;font-size:11px;color:#000;">Add:</div>
<div class="a" style="left:995px;top:298px;width:122px;height:258px;border:1px solid #191919;border-radius:4px;overflow:hidden;background:#191919"><div class="a menu" style="left:0;top:0px;width:122px;height:18px"></div><div class="a tool0" style="left:0;top:19px;width:122px;height:19px"></div><div class="a tool0" style="left:0;top:39px;width:122px;height:19px"></div><div class="a tool0" style="left:0;top:59px;width:122px;height:19px"></div><div class="a tool0" style="left:0;top:79px;width:122px;height:19px"></div><div class="a tool0" style="left:0;top:99px;width:122px;height:19px"></div><div class="a tool0" style="left:0;top:119px;width:122px;height:19px"></div><div class="a tool0" style="left:0;top:139px;width:122px;height:19px"></div><div class="a tool0" style="left:0;top:159px;width:122px;height:19px"></div><div class="a tool0" style="left:0;top:179px;width:122px;height:19px"></div><div class="a" style="left:60px;top:179px;width:1px;height:19px;background:#191919"></div><div class="a tool0" style="left:0;top:199px;width:122px;height:19px"></div><div class="a" style="left:60px;top:199px;width:1px;height:19px;background:#191919"></div><div class="a tool0" style="left:0;top:219px;width:122px;height:19px"></div><div class="a tool0" style="left:0;top:239px;width:122px;height:19px"></div></div><div class="t" style="left:1003px;top:304.29px;font-size:11px;color:#fff;">Extrude</div><svg class="a" style="left:1109px;top:301px" width="7" height="14"><path d="M0.5 5.5 L3.5 0.5 L6.5 5.5Z M0.5 7.5 L3.5 12.5 L6.5 7.5Z" fill="#c8c8c8"/></svg><div class="t" style="left:1003px;top:323.29px;font-size:11px;color:#000;">Extrude Region</div><div class="t" style="left:1003px;top:343.29px;font-size:11px;color:#000;">Extrude Individual</div><div class="t" style="left:1003px;top:363.29px;font-size:11px;color:#000;">Inset Faces</div><div class="t" style="left:1003px;top:383.29px;font-size:11px;color:#000;">Make Edge/Face</div><div class="t" style="left:1003px;top:403.29px;font-size:11px;color:#000;">Subdivide</div><div class="t" style="left:1003px;top:423.29px;font-size:11px;color:#000;">Loop Cut and Slide</div><div class="t" style="left:1003px;top:443.29px;font-size:11px;color:#000;">Offset Edge Slide</div><div class="t" style="left:1003px;top:463.29px;font-size:11px;color:#000;">Duplicate</div><div class="t" style="left:1003px;top:483.29px;font-size:11px;color:#000;">Spin</div><div class="t" style="left:1064px;top:483.29px;font-size:11px;color:#000;">Screw</div><div class="t" style="left:1003px;top:503.29px;font-size:11px;color:#000;">Knife</div><div class="t" style="left:1064px;top:503.29px;font-size:11px;color:#000;">Select</div><div class="t" style="left:1003px;top:523.29px;font-size:11px;color:#000;">Knife Project</div><div class="t" style="left:1003px;top:543.29px;font-size:11px;color:#000;">Bisect</div>
<div class="t" style="left:1003px;top:568.69px;font-size:11px;color:#000;">Remove:</div>
<div class="a" style="left:995px;top:583px;width:122px;height:58px;border:1px solid #191919;border-radius:4px;overflow:hidden;background:#191919"><div class="a menu" style="left:0;top:0px;width:122px;height:18px"></div><div class="a menu" style="left:0;top:19px;width:122px;height:19px"></div><div class="a tool0" style="left:0;top:39px;width:122px;height:19px"></div></div><div class="t" style="left:1003px;top:589.29px;font-size:11px;color:#fff;">Delete</div><svg class="a" style="left:1109px;top:586px" width="7" height="14"><path d="M0.5 5.5 L3.5 0.5 L6.5 5.5Z M0.5 7.5 L3.5 12.5 L6.5 7.5Z" fill="#c8c8c8"/></svg><div class="t" style="left:1003px;top:609.29px;font-size:11px;color:#fff;">Merge</div><svg class="a" style="left:1109px;top:606px" width="7" height="14"><path d="M0.5 5.5 L3.5 0.5 L6.5 5.5Z M0.5 7.5 L3.5 12.5 L6.5 7.5Z" fill="#c8c8c8"/></svg><div class="t" style="left:1003px;top:628.29px;font-size:11px;color:#000;">Remove Doubles</div>
<div class="a" style="left:991px;top:650px;width:132px;height:1px;background:#5e5e5e"></div><div class="a" style="left:991px;top:651px;width:132px;height:1px;background:#848484"></div>
<svg class="a" style="left:1000px;top:658px" width="9" height="10"><path d="M0.5 0.5 L8.5 5 L0.5 9.5 Z" fill="#1a1a1a"/></svg><div class="t" style="left:1013px;top:656.84px;font-size:12px;color:#000;">Weight Tools</div><svg class="a" style="left:1105px;top:662px" width="12" height="6"><rect x="0" y="0" width="1" height="1" fill="#d8d8d8"/><rect x="0" y="1" width="1" height="1" fill="#111"/><rect x="0" y="3" width="1" height="1" fill="#d8d8d8"/><rect x="0" y="4" width="1" height="1" fill="#111"/><rect x="3" y="0" width="1" height="1" fill="#d8d8d8"/><rect x="3" y="1" width="1" height="1" fill="#111"/><rect x="3" y="3" width="1" height="1" fill="#d8d8d8"/><rect x="3" y="4" width="1" height="1" fill="#111"/><rect x="6" y="0" width="1" height="1" fill="#d8d8d8"/><rect x="6" y="1" width="1" height="1" fill="#111"/><rect x="6" y="3" width="1" height="1" fill="#d8d8d8"/><rect x="6" y="4" width="1" height="1" fill="#111"/><rect x="9" y="0" width="1" height="1" fill="#d8d8d8"/><rect x="9" y="1" width="1" height="1" fill="#111"/><rect x="9" y="3" width="1" height="1" fill="#d8d8d8"/><rect x="9" y="4" width="1" height="1" fill="#111"/></svg>
<div class="a" style="left:991px;top:674px;width:132px;height:1px;background:#5e5e5e"></div><div class="a" style="left:991px;top:675px;width:132px;height:1px;background:#848484"></div>
<svg class="a" style="left:1000px;top:682px" width="9" height="10"><path d="M0.5 0.5 L8.5 5 L0.5 9.5 Z" fill="#1a1a1a"/></svg><div class="t" style="left:1013px;top:680.84px;font-size:12px;color:#000;">History</div><svg class="a" style="left:1105px;top:686px" width="12" height="6"><rect x="0" y="0" width="1" height="1" fill="#d8d8d8"/><rect x="0" y="1" width="1" height="1" fill="#111"/><rect x="0" y="3" width="1" height="1" fill="#d8d8d8"/><rect x="0" y="4" width="1" height="1" fill="#111"/><rect x="3" y="0" width="1" height="1" fill="#d8d8d8"/><rect x="3" y="1" width="1" height="1" fill="#111"/><rect x="3" y="3" width="1" height="1" fill="#d8d8d8"/><rect x="3" y="4" width="1" height="1" fill="#111"/><rect x="6" y="0" width="1" height="1" fill="#d8d8d8"/><rect x="6" y="1" width="1" height="1" fill="#111"/><rect x="6" y="3" width="1" height="1" fill="#d8d8d8"/><rect x="6" y="4" width="1" height="1" fill="#111"/><rect x="9" y="0" width="1" height="1" fill="#d8d8d8"/><rect x="9" y="1" width="1" height="1" fill="#111"/><rect x="9" y="3" width="1" height="1" fill="#d8d8d8"/><rect x="9" y="4" width="1" height="1" fill="#111"/></svg>
<svg class="a" style="left:980px;top:850px" width="9" height="9"><path d="M0.5 0.5 L8.5 0.5 L4.5 8.5 Z" fill="#1a1a1a"/></svg><div class="t" style="left:993px;top:848.84px;font-size:12px;color:#000;">Toggle Editmode</div><svg class="a" style="left:1105px;top:853px" width="12" height="6"><rect x="0" y="0" width="1" height="1" fill="#d8d8d8"/><rect x="0" y="1" width="1" height="1" fill="#111"/><rect x="0" y="3" width="1" height="1" fill="#d8d8d8"/><rect x="0" y="4" width="1" height="1" fill="#111"/><rect x="3" y="0" width="1" height="1" fill="#d8d8d8"/><rect x="3" y="1" width="1" height="1" fill="#111"/><rect x="3" y="3" width="1" height="1" fill="#d8d8d8"/><rect x="3" y="4" width="1" height="1" fill="#111"/><rect x="6" y="0" width="1" height="1" fill="#d8d8d8"/><rect x="6" y="1" width="1" height="1" fill="#111"/><rect x="6" y="3" width="1" height="1" fill="#d8d8d8"/><rect x="6" y="4" width="1" height="1" fill="#111"/><rect x="9" y="0" width="1" height="1" fill="#d8d8d8"/><rect x="9" y="1" width="1" height="1" fill="#111"/><rect x="9" y="3" width="1" height="1" fill="#d8d8d8"/><rect x="9" y="4" width="1" height="1" fill="#111"/></svg>
<div class="a" style="left:0;top:0;width:1897px;height:1px;background:#000"></div>
<div class="a" style="left:0;top:1px;width:745px;height:1px;background:#474747"></div>
<div class="a" style="left:746px;top:1px;width:220px;height:1px;background:#8c8c8c"></div>
<div class="a" style="left:987px;top:1px;width:140px;height:1px;background:#8c8c8c"></div>
</body></html>
